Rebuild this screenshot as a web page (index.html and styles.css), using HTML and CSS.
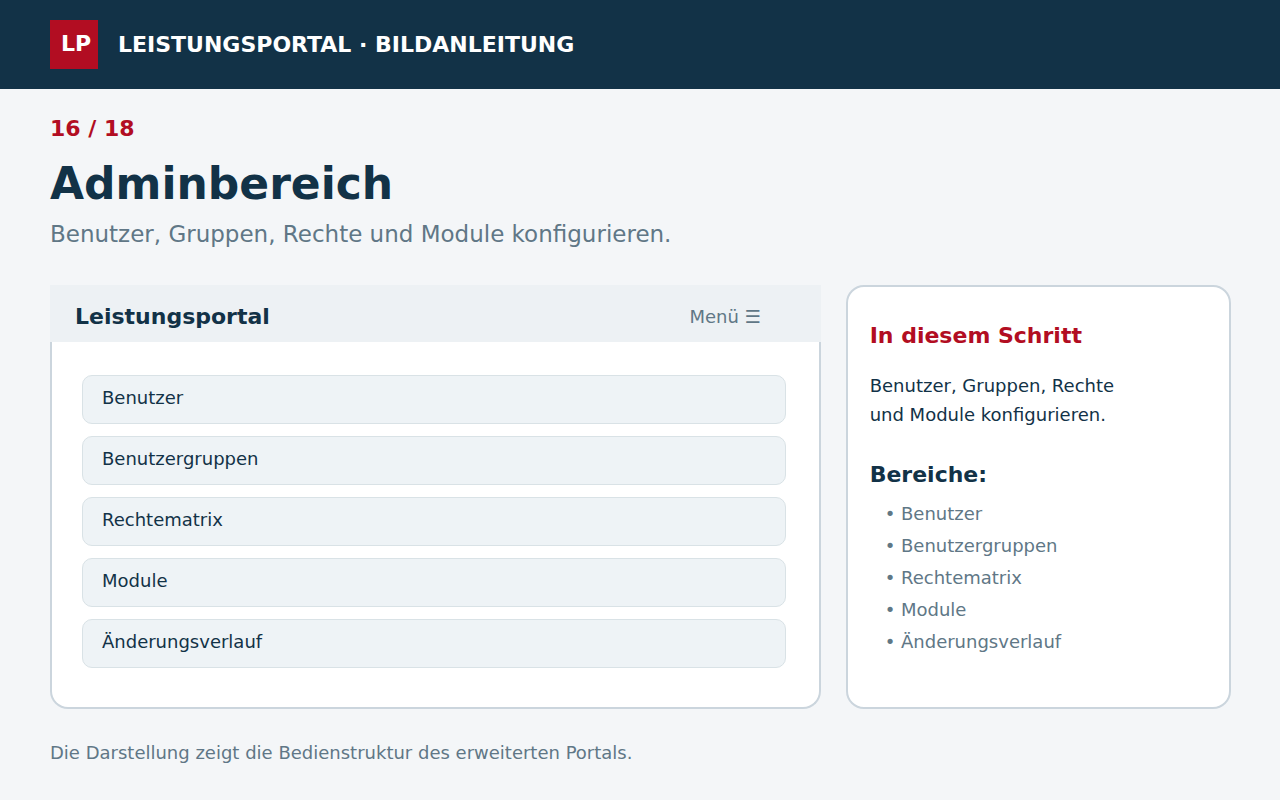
FILE: index.html
```html
<!DOCTYPE html>
<html lang="de">
<head>
<meta charset="utf-8">
<meta name="viewport" content="width=device-width, initial-scale=1">
<title>Leistungsportal · Bildanleitung</title>
<link rel="stylesheet" href="styles.css">
</head>
<body>
<header class="topbar">
  <div class="logo">LP</div>
  <div class="brand">LEISTUNGSPORTAL · BILDANLEITUNG</div>
</header>
<main class="page">
  <p class="step">16 / 18</p>
  <h1 class="title">Adminbereich</h1>
  <p class="subtitle">Benutzer, Gruppen, Rechte und Module konfigurieren.</p>
  <div class="columns">
    <section class="portal">
      <div class="portal-head">
        <h2 class="portal-name">Leistungsportal</h2>
        <button class="menu" type="button">Menü ☰</button>
      </div>
      <ul class="modules">
        <li class="module">Benutzer</li>
        <li class="module">Benutzergruppen</li>
        <li class="module">Rechtematrix</li>
        <li class="module">Module</li>
        <li class="module">Änderungsverlauf</li>
      </ul>
    </section>
    <aside class="info">
      <h2 class="info-title">In diesem Schritt</h2>
      <p class="info-text">Benutzer, Gruppen, Rechte<br>und Module konfigurieren.</p>
      <h3 class="areas-title">Bereiche:</h3>
      <ul class="areas">
        <li>• Benutzer</li>
        <li>• Benutzergruppen</li>
        <li>• Rechtematrix</li>
        <li>• Module</li>
        <li>• Änderungsverlauf</li>
      </ul>
    </aside>
  </div>
  <p class="note">Die Darstellung zeigt die Bedienstruktur des erweiterten Portals.</p>
</main>
</body>
</html>
```
FILE: styles.css
```css
* {
  box-sizing: border-box;
  margin: 0;
  padding: 0;
}

body {
  background: #f4f6f8;
  color: #123247;
  font: 18px/24px "DejaVu Sans", sans-serif;
}

ul {
  list-style: none;
}

.topbar {
  display: flex;
  align-items: center;
  gap: 20px;
  padding: 20px 50px;
  background: #123247;
  color: #fff;
  font-size: 22px;
  font-weight: bold;
}

.logo {
  width: 48px;
  height: 49px;
  padding-left: 4px;
  background: #b20d22;
  line-height: 48px;
  text-align: center;
}

.page {
  padding: 26px 49px 32px 50px;
}

.step {
  color: #b20d22;
  font-size: 22px;
  font-weight: bold;
  line-height: 28px;
}

.title {
  margin-top: 14px;
  font-size: 44px;
  line-height: 54px;
}

.subtitle {
  margin-top: 8px;
  color: #607786;
  font-size: 23px;
  line-height: 30px;
}

.columns {
  display: grid;
  grid-template-columns: 2fr 1fr;
  gap: 25px;
  margin-top: 36px;
}

.portal,
.info {
  background: #fff;
  border: 2px solid #cbd5dd;
  border-radius: 18px;
}

.portal {
  border-top: 0;
  border-radius: 0 0 18px 18px;
}

.portal-head {
  display: flex;
  justify-content: space-between;
  align-items: center;
  margin: 0 -2px;
  padding: 18px 60px 11px 25px;
  background: #edf1f4;
}

.portal-name,
.info-title,
.areas-title {
  font-size: 22px;
  line-height: 28px;
}

.menu {
  border: 0;
  background: none;
  color: #607786;
  font: inherit;
}

.modules {
  display: grid;
  gap: 12px;
  padding: 33px 33px 39px 30px;
}

.module {
  padding: 10px 19px 13px;
  background: #eef3f6;
  border: 1px solid #d9e2e6;
  border-radius: 10px;
}

.info {
  padding: 35px 22px;
}

.info-title {
  color: #b20d22;
}

.info-text {
  margin-top: 21px;
  line-height: 29px;
}

.areas-title {
  margin-top: 32px;
}

.areas {
  margin-top: 9px;
  padding-left: 15px;
  color: #607786;
  line-height: 32px;
}

.note {
  margin-top: 32px;
  color: #607786;
}
```
